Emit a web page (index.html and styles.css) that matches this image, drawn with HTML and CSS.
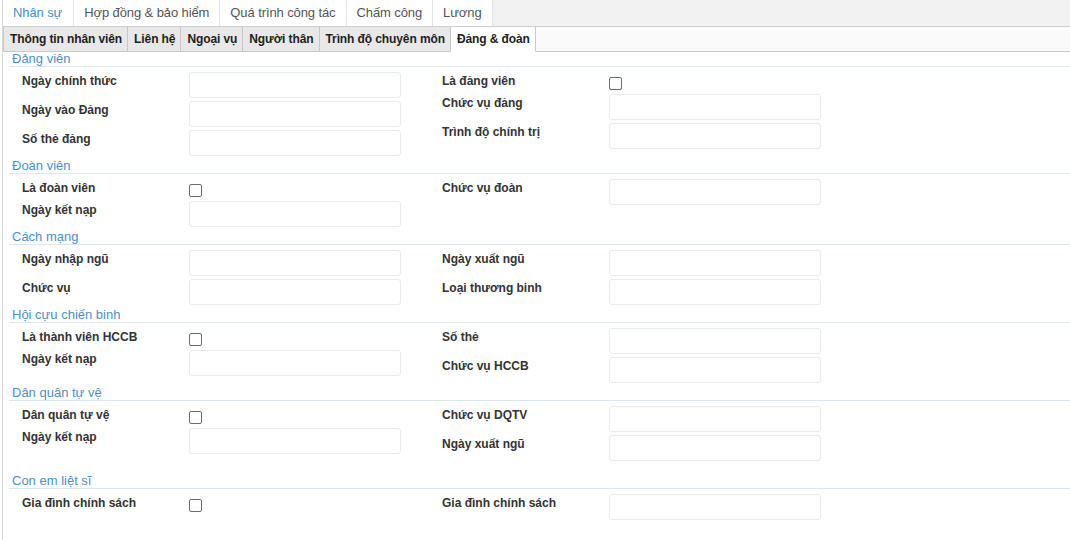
FILE: index.html
```html
<!DOCTYPE html>
<html lang="vi">
<head>
<meta charset="utf-8">
<title>Nhân sự</title>
<link rel="stylesheet" href="styles.css">
</head>
<body>
<div class="app">
  <nav class="topnav">
    <a class="toptab active">Nhân sự</a>
    <a class="toptab">Hợp đồng &amp; bảo hiểm</a>
    <a class="toptab">Quá trình công tác</a>
    <a class="toptab">Chấm công</a>
    <a class="toptab">Lương</a>
    <span class="topfill"></span>
  </nav>
  <nav class="subnav">
    <a class="subtab">Thông tin nhân viên</a>
    <a class="subtab">Liên hệ</a>
    <a class="subtab">Ngoại vụ</a>
    <a class="subtab">Người thân</a>
    <a class="subtab">Trình độ chuyên môn</a>
    <a class="subtab active">Đảng &amp; đoàn</a>
    <span class="subfill"></span>
  </nav>

  <section class="group">
    <h3 class="group-title">Đảng viên</h3>
    <div class="fields">
      <div class="col">
        <div class="row"><label class="lbl">Ngày chính thức</label><input class="inp" type="text"></div>
        <div class="row"><label class="lbl">Ngày vào Đảng</label><input class="inp" type="text"></div>
        <div class="row"><label class="lbl">Số thẻ đảng</label><input class="inp" type="text"></div>
      </div>
      <div class="col">
        <div class="row check"><label class="lbl">Là đảng viên</label><span class="cb"></span></div>
        <div class="row"><label class="lbl">Chức vụ đảng</label><input class="inp" type="text"></div>
        <div class="row"><label class="lbl">Trình độ chính trị</label><input class="inp" type="text"></div>
      </div>
    </div>
  </section>

  <section class="group">
    <h3 class="group-title">Đoàn viên</h3>
    <div class="fields">
      <div class="col">
        <div class="row check"><label class="lbl">Là đoàn viên</label><span class="cb"></span></div>
        <div class="row"><label class="lbl">Ngày kết nạp</label><input class="inp" type="text"></div>
      </div>
      <div class="col">
        <div class="row"><label class="lbl">Chức vụ đoàn</label><input class="inp" type="text"></div>
      </div>
    </div>
  </section>

  <section class="group">
    <h3 class="group-title">Cách mạng</h3>
    <div class="fields">
      <div class="col">
        <div class="row"><label class="lbl">Ngày nhập ngũ</label><input class="inp" type="text"></div>
        <div class="row"><label class="lbl">Chức vụ</label><input class="inp" type="text"></div>
      </div>
      <div class="col">
        <div class="row"><label class="lbl">Ngày xuất ngũ</label><input class="inp" type="text"></div>
        <div class="row"><label class="lbl">Loại thương binh</label><input class="inp" type="text"></div>
      </div>
    </div>
  </section>

  <section class="group">
    <h3 class="group-title">Hội cựu chiến binh</h3>
    <div class="fields">
      <div class="col">
        <div class="row check"><label class="lbl">Là thành viên HCCB</label><span class="cb"></span></div>
        <div class="row"><label class="lbl">Ngày kết nạp</label><input class="inp" type="text"></div>
      </div>
      <div class="col">
        <div class="row"><label class="lbl">Số thẻ</label><input class="inp" type="text"></div>
        <div class="row"><label class="lbl">Chức vụ HCCB</label><input class="inp" type="text"></div>
      </div>
    </div>
  </section>

  <section class="group spaced">
    <h3 class="group-title">Dân quân tự vệ</h3>
    <div class="fields">
      <div class="col">
        <div class="row check"><label class="lbl">Dân quân tự vệ</label><span class="cb"></span></div>
        <div class="row"><label class="lbl">Ngày kết nạp</label><input class="inp" type="text"></div>
      </div>
      <div class="col">
        <div class="row"><label class="lbl">Chức vụ DQTV</label><input class="inp" type="text"></div>
        <div class="row"><label class="lbl">Ngày xuất ngũ</label><input class="inp" type="text"></div>
      </div>
    </div>
  </section>

  <section class="group">
    <h3 class="group-title">Con em liệt sĩ</h3>
    <div class="fields">
      <div class="col">
        <div class="row check"><label class="lbl">Gia đình chính sách</label><span class="cb"></span></div>
      </div>
      <div class="col">
        <div class="row"><label class="lbl">Gia đình chính sách</label><input class="inp" type="text"></div>
      </div>
    </div>
  </section>
</div>
</body>
</html>
```

FILE: styles.css
```css
* { box-sizing: border-box; }

html, body {
  margin: 0;
  padding: 0;
  background: #ffffff;
}

body {
  font-family: "Liberation Sans", Arial, sans-serif;
  color: #333333;
  overflow: hidden;
}

.app {
  margin-left: 2px;
  border-left: 1px solid #d6d6d6;
  min-height: 540px;
}

/* top navigation */
.topnav {
  display: flex;
  height: 27px;
  border-bottom: 1px solid #cfcfcf;
  background: #f2f2f2;
}

.toptab {
  display: block;
  padding: 0 10px;
  background: #ffffff;
  border-right: 1px solid #e2e2e2;
  font-size: 13px;
  line-height: 25px;
  letter-spacing: -0.1px;
  color: #555555;
  white-space: nowrap;
}

.toptab.active {
  color: #3d8fd1;
  padding-right: 11px;
}

.topfill { flex: 1; }

/* sub navigation */
.subnav {
  display: flex;
  height: 25px;
}

.subtab {
  display: block;
  padding: 0 5px 0 6px;
  background: #e8e8e8;
  border-left: 1px solid #c8c8c8;
  border-bottom: 1px solid #c8c8c8;
  font-size: 12px;
  font-weight: bold;
  line-height: 24px;
  letter-spacing: -0.1px;
  color: #222222;
  white-space: nowrap;
}

.subtab.active {
  background: #ffffff;
  border-right: 1px solid #c8c8c8;
  border-bottom-color: #ffffff;
}

.subfill {
  flex: 1;
  background: #fafafa;
  border-bottom: 1px solid #c8c8c8;
}

/* groups */
.group-title {
  margin: 0 0 0 6px;
  padding-left: 3px;
  height: 15px;
  border-bottom: 1px solid #dde6ef;
  font-size: 13px;
  font-weight: normal;
  line-height: 13px;
  color: #4a90c8;
}

.fields {
  display: grid;
  grid-template-columns: 420px 420px;
  padding: 5px 0 0 19px;
}

.group.spaced .fields { padding-bottom: 10px; }

.row {
  display: flex;
  align-items: flex-start;
  height: 26px;
  margin-bottom: 3px;
}

.row.check { height: 19px; }

.lbl {
  display: block;
  width: 167px;
  padding-top: 2px;
  font-size: 12px;
  font-weight: bold;
  line-height: 15px;
  color: #333333;
}

.inp {
  display: block;
  width: 212px;
  height: 26px;
  margin: 0;
  padding: 0 6px;
  border: 1px solid #ebebeb;
  border-radius: 3px;
  background: #ffffff;
  font: 12px "Liberation Sans", Arial, sans-serif;
  outline: none;
}

.cb {
  display: block;
  width: 13px;
  height: 13px;
  margin-top: 5px;
  border: 1px solid #6b6b6b;
  border-radius: 2px;
  background: #ffffff;
}
```
